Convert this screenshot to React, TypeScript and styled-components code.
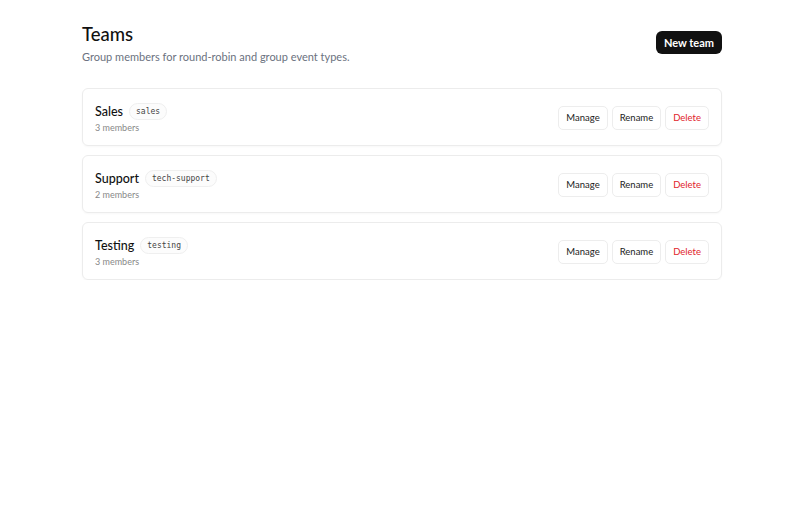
import React from "react";
import styled, { createGlobalStyle } from "styled-components";

const Global = createGlobalStyle`
  html, body { margin: 0; padding: 0; background: #fff; }
  body { font-family: Lato, "Noto Sans", sans-serif; color: #111; }
`;

const Page = styled.main`
  width: 640px;
  padding-left: 4px;
  margin: 0 auto;
  padding-top: 23px;
`;

const Header = styled.header`
  display: flex;
  justify-content: space-between;
  align-items: flex-start;
  margin-bottom: 24px;
`;

const Title = styled.h1`
  margin: 0;
  font-size: 18.5px;
  font-weight: 500;
  line-height: 22px;
  color: #111;
`;

const Subtitle = styled.p`
  margin: 5px 0 0;
  font-size: 11px;
  line-height: 14px;
  color: #6b7280;
`;

const PrimaryButton = styled.button`
  margin-top: 8px;
  height: 23px;
  padding: 0 8px;
  border: none;
  border-radius: 6px;
  background: #111;
  color: #fff;
  font-family: inherit;
  font-size: 11px;
  font-weight: 700;
  cursor: pointer;
`;

const List = styled.div`
  display: flex;
  flex-direction: column;
  gap: 9px;
`;

const Card = styled.div`
  display: flex;
  align-items: center;
  justify-content: space-between;
  height: 58px;
  box-sizing: border-box;
  padding: 0 12px 0 12px;
  border: 1px solid #ececec;
  border-radius: 6px;
  box-shadow: 0 1px 2px rgba(0, 0, 0, 0.03);
`;

const Info = styled.div`
  display: flex;
  flex-direction: column;
  gap: 2px;
  padding-top: 1px;
`;

const NameRow = styled.div`
  display: flex;
  align-items: center;
  gap: 6px;
`;

const Name = styled.span`
  font-size: 12.5px;
  font-weight: 500;
  color: #111;
`;

const Slug = styled.code`
  font-family: "DejaVu Sans Mono", "Liberation Mono", monospace;
  font-size: 8px;
  color: #444;
  padding: 3px 6px;
  border: 1px solid #efefef;
  border-radius: 999px;
  background: #fcfcfc;
`;

const Meta = styled.span`
  font-size: 9px;
  color: #888;
`;

const Actions = styled.div`
  display: flex;
  gap: 4px;
  padding-top: 1px;
`;

const ActionButton = styled.button<{ $danger?: boolean }>`
  height: 24px;
  padding: 0 7px;
  border: 1px solid #ededed;
  border-radius: 5px;
  background: #fff;
  color: ${(p) => (p.$danger ? "#e11d2a" : "#222")};
  font-family: inherit;
  font-size: 9.5px;
  cursor: pointer;
`;

const teams = [
  { name: "Sales", slug: "sales", members: 3 },
  { name: "Support", slug: "tech-support", members: 2 },
  { name: "Testing", slug: "testing", members: 3 },
];

export default function App() {
  return (
    <>
      <Global />
      <Page>
        <Header>
          <div>
            <Title>Teams</Title>
            <Subtitle>Group members for round-robin and group event types.</Subtitle>
          </div>
          <PrimaryButton>New team</PrimaryButton>
        </Header>
        <List>
          {teams.map((t) => (
            <Card key={t.slug}>
              <Info>
                <NameRow>
                  <Name>{t.name}</Name>
                  <Slug>{t.slug}</Slug>
                </NameRow>
                <Meta>{t.members} members</Meta>
              </Info>
              <Actions>
                <ActionButton>Manage</ActionButton>
                <ActionButton>Rename</ActionButton>
                <ActionButton $danger>Delete</ActionButton>
              </Actions>
            </Card>
          ))}
        </List>
      </Page>
    </>
  );
}
